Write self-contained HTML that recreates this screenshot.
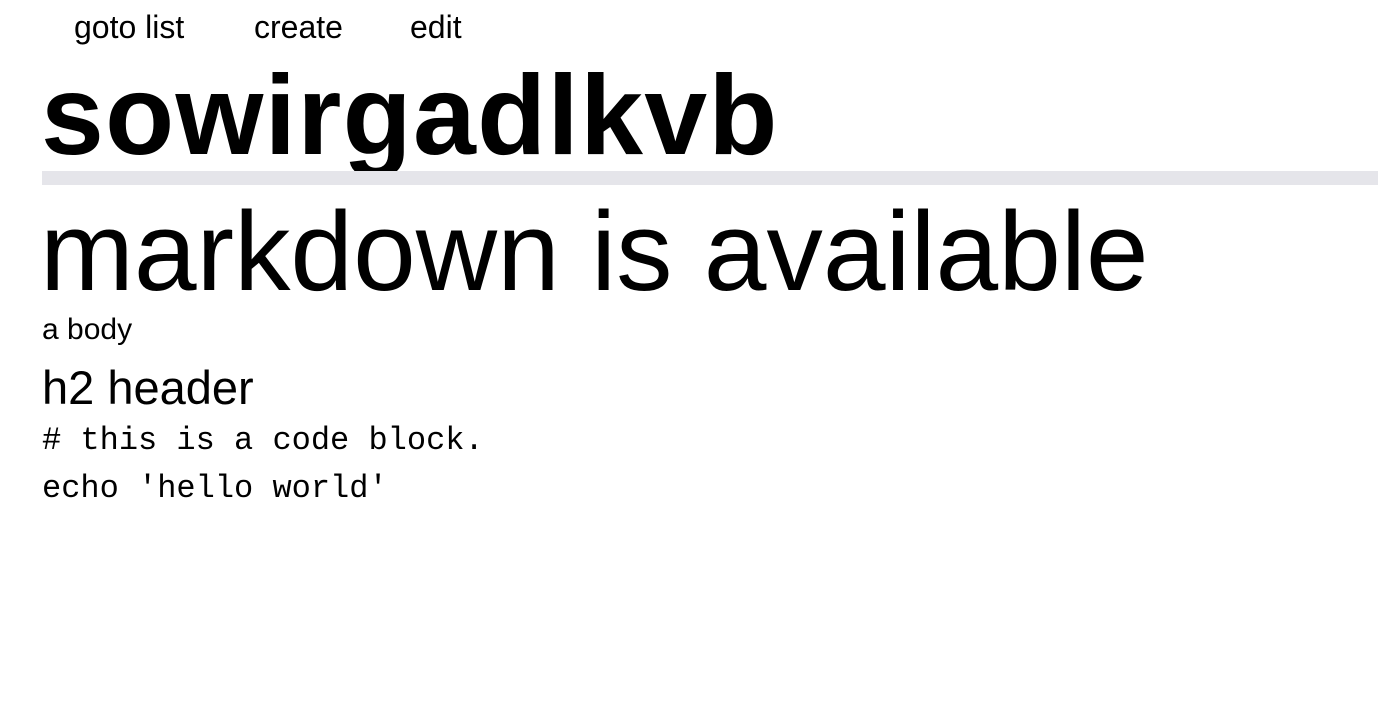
<!DOCTYPE html>
<html><head><meta charset="utf-8"><style>
html,body{margin:0;padding:0;background:#fff;width:1378px;height:704px;overflow:hidden;position:relative;color:#000}
.t{position:absolute;white-space:nowrap;line-height:1;font-family:"Liberation Sans",sans-serif}
.m{font-family:"Liberation Mono",monospace}
</style></head><body>
<div class="t" style="left:74px;top:11px;font-size:32px">goto list</div>
<div class="t" style="left:254px;top:11px;font-size:32px">create</div>
<div class="t" style="left:410px;top:11px;font-size:32px">edit</div>
<div class="t" style="left:41px;top:59px;font-size:113px;font-weight:bold;letter-spacing:1.3px">sowirgadlkvb</div>
<div style="position:absolute;left:42px;top:171px;width:1336px;height:14px;background:#e5e5ea"></div>
<div class="t" style="left:40px;top:195px;font-size:112.7px">markdown is available</div>
<div class="t" style="left:42px;top:315px;font-size:30px">a body</div>
<div class="t" style="left:42px;top:364px;font-size:47px">h2 header</div>
<div class="t m" style="left:42px;top:425px;font-size:32px">#&nbsp;this is a code block.</div>
<div class="t m" style="left:42px;top:473px;font-size:32px">echo 'hello world'</div>
</body></html>
